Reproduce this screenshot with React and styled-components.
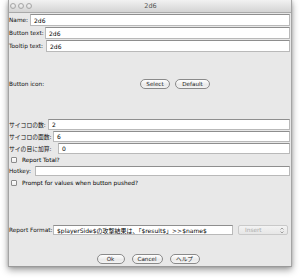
import React from "react";
import styled, { createGlobalStyle } from "styled-components";

const Global = createGlobalStyle`
  html, body { margin: 0; padding: 0; background: #ffffff; }
  body { font-family: "DejaVu Sans", "Noto Sans CJK JP", sans-serif; }
  * { box-sizing: border-box; }
`;

const Page = styled.div`
  width: 300px;
  height: 280px;
  padding-left: 8px;
  overflow: hidden;
`;

const Window = styled.div`
  width: 284px;
  height: 267px;
  background: #e8e8e8;
  border-left: 1px solid #a4a4a4;
  border-right: 1px solid #a4a4a4;
  border-bottom: 1px solid #9a9a9a;
  box-shadow: 0 3px 7px rgba(0, 0, 0, 0.38), 0 0 3px rgba(0, 0, 0, 0.18);
  display: flex;
  flex-direction: column;
  font-size: 5.8px;
  color: #000;
`;

const TitleBar = styled.div`
  height: 13px;
  border-bottom: 1px solid #a9a9a9;
  background: linear-gradient(#f2f2f2, #d4d4d4);
  display: grid;
  grid-template-columns: 1fr auto 1fr;
  align-items: center;
  padding-left: 1px;
`;

const Lights = styled.div`
  display: flex;
  gap: 2px;
`;

const Light = styled.span`
  width: 6px;
  height: 6px;
  border-radius: 50%;
  border: 1px solid #a8a8a8;
  background: radial-gradient(circle at 50% 35%, #f4f4f4, #cfcfcf);
`;

const Title = styled.div`
  font-size: 6.5px;
  color: #555;
`;

const Body = styled.div`
  flex: 1;
  display: flex;
  flex-direction: column;
  padding-right: 1px;
`;

const Row = styled.div`
  display: flex;
  align-items: center;
  height: ${(p) => p.$h}px;
  margin-top: ${(p) => p.$mt || 0}px;
`;

const Label = styled.div`
  width: ${(p) => p.$w}px;
  flex: none;
  white-space: nowrap;
  overflow: visible;
  color: #111;
`;

const Field = styled.div`
  flex: ${(p) => (p.$w ? "none" : 1)};
  width: ${(p) => (p.$w ? p.$w + "px" : "auto")};
  height: 100%;
  background: #ffffff;
  border: 1px solid #b9b9b9;
  border-top-color: #8e8e8e;
  display: flex;
  align-items: center;
  padding-left: 3px;
  white-space: nowrap;
  overflow: hidden;
  color: #000;
  font-size: 6px;
`;

const ButtonGroup = styled.div`
  flex: 1;
  display: flex;
  justify-content: center;
  gap: 5px;
`;

const Pill = styled.div`
  width: ${(p) => p.$w}px;
  height: 10px;
  border: 1px solid #8a8a8a;
  border-radius: 5px;
  background: linear-gradient(#ffffff, #e9e9e9 60%, #f4f4f4);
  display: flex;
  align-items: center;
  justify-content: center;
  color: #222;
  font-size: 5.6px;
`;

const Check = styled.span`
  width: 6px;
  height: 6px;
  border: 1px solid #8c8c8c;
  border-radius: 1px;
  background: linear-gradient(#ffffff, #ececec);
  margin: 0 5px 0 2px;
  flex: none;
`;

const Select = styled.div`
  width: 50px;
  height: 100%;
  margin-left: 5px;
  margin-right: 2px;
  border: 1px solid #c9c9c9;
  border-radius: 2px;
  background: linear-gradient(#f3f3f3, #e6e6e6);
  display: flex;
  align-items: center;
  justify-content: space-between;
  padding: 0 3px 0 6px;
  color: #aaaaaa;
`;

const BottomBar = styled.div`
  display: flex;
  justify-content: center;
  gap: 7px;
  margin-top: 19px;
  padding-right: 3px;
`;

export default function App() {
  return (
    <Page>
      <Global />
      <Window>
        <TitleBar>
          <Lights>
            <Light />
            <Light />
            <Light />
          </Lights>
          <Title>2d6</Title>
          <span />
        </TitleBar>
        <Body>
          <Row $h={12} $mt={1}>
            <Label $w={21}>Name:</Label>
            <Field>2d6</Field>
          </Row>
          <Row $h={12} $mt={1}>
            <Label $w={36}>Button text:</Label>
            <Field>2d6</Field>
          </Row>
          <Row $h={12} $mt={1}>
            <Label $w={37}>Tooltip text:</Label>
            <Field>2d6</Field>
          </Row>
          <Row $h={64}>
            <Label $w={51}>Button icon:</Label>
            <ButtonGroup>
              <Pill $w={30}>Select</Pill>
              <Pill $w={35}>Default</Pill>
            </ButtonGroup>
          </Row>
          <Row $h={11} $mt={3}>
            <Label $w={39}>サイコロの数:</Label>
            <Field>2</Field>
          </Row>
          <Row $h={11} $mt={1}>
            <Label $w={44}>サイコロの面数:</Label>
            <Field>6</Field>
          </Row>
          <Row $h={11} $mt={1}>
            <Label $w={49}>サイの目に加算:</Label>
            <Field>0</Field>
          </Row>
          <Row $h={12}>
            <Check />
            <span>Report Total?</span>
          </Row>
          <Row $h={10}>
            <Label $w={26}>Hotkey:</Label>
            <Field />
          </Row>
          <Row $h={12} $mt={1}>
            <Check />
            <span>Prompt for values when button pushed?</span>
          </Row>
          <Row $h={10} $mt={36}>
            <Label $w={44}>Report Format:</Label>
            <Field $w={180}>$playerSide$の攻撃結果は、「$result$」&gt;&gt;$name$</Field>
            <Select>
              <span>Insert</span>
              <svg width="4" height="7" viewBox="0 0 4 7">
                <path d="M0.5 2.5 L2 1 L3.5 2.5 M0.5 4.5 L2 6 L3.5 4.5" fill="none" stroke="#8a8a8a" strokeWidth="0.8" />
              </svg>
            </Select>
          </Row>
          <BottomBar>
            <Pill $w={28}>Ok</Pill>
            <Pill $w={31}>Cancel</Pill>
            <Pill $w={30}>ヘルプ</Pill>
          </BottomBar>
        </Body>
      </Window>
    </Page>
  );
}
